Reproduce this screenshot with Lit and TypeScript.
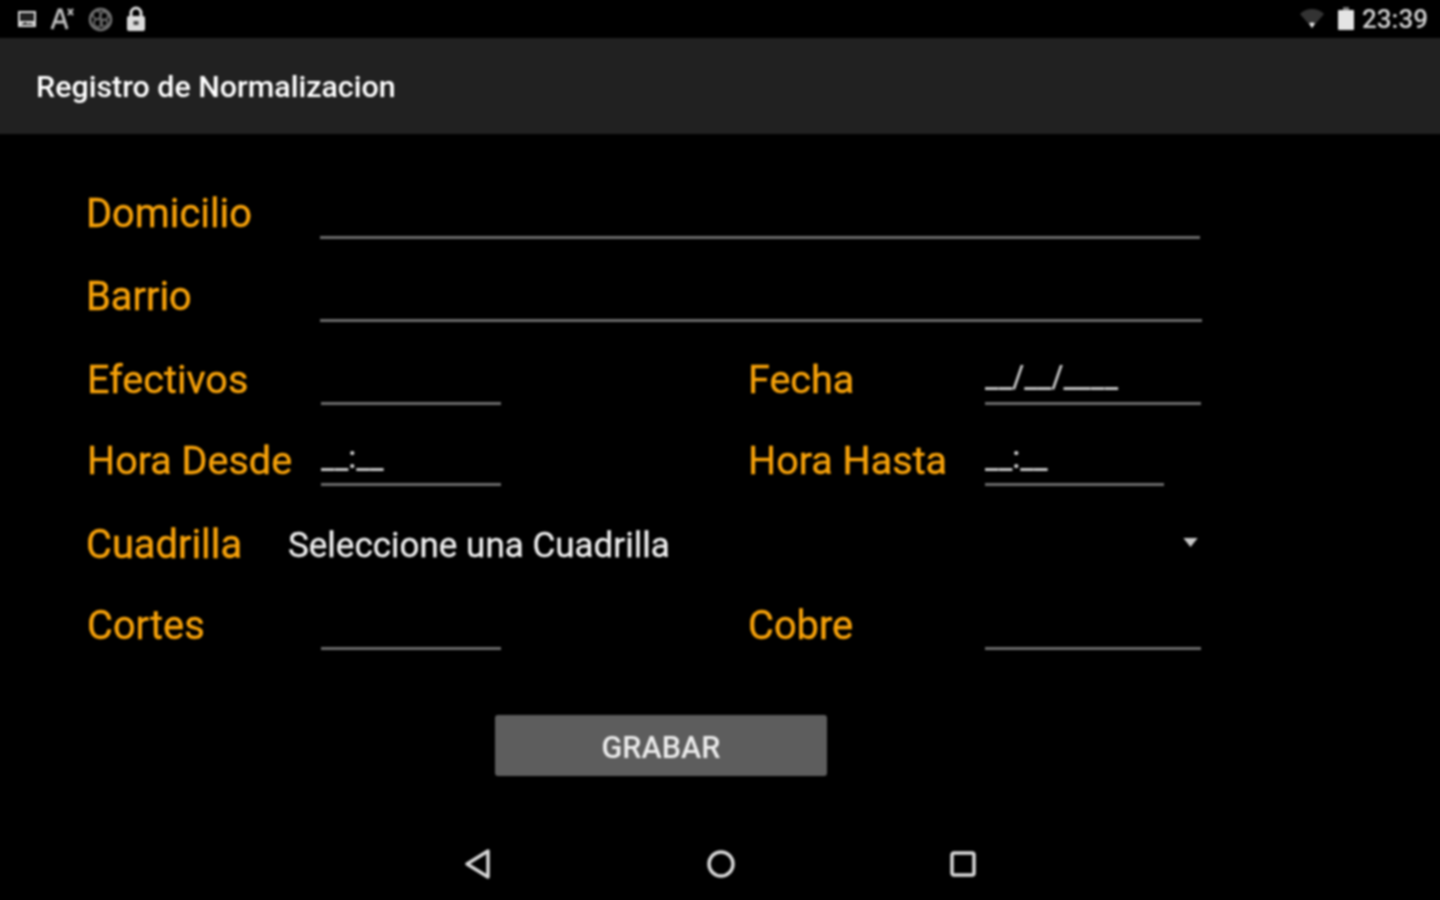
import { LitElement, html, css } from "lit";
import { customElement } from "lit/decorators.js";

@customElement("app-root")
export class AppRoot extends LitElement {
  static styles = css`
    :host { display: block; width: 1440px; height: 900px; background: #000; overflow: hidden; font-family: Roboto, "Liberation Sans", sans-serif; }
    .screen { width: 1448px; height: 900px; margin-left: -4px; padding: 0 4px; box-sizing: border-box; background: #000; display: flex; flex-direction: column; filter: blur(0.8px); }
    .status { height: 38px; flex: none; display: flex; align-items: center; justify-content: space-between; padding: 0 12px 0 16px; box-sizing: border-box; }
    .status-left, .status-right { display: flex; align-items: center; }
    .status-left { gap: 12px; }
    .status-right { gap: 11px; }
    .wifi { margin-right: 2px; }
    .battery { margin-right: -3px; }
    .clock { color: #d2d2d2; font-size: 26px; font-weight: 500; line-height: 38px; }
    .appbar { height: 96px; flex: none; margin: 0 -4px; background: #212121; display: flex; align-items: center; padding-left: 40px; box-sizing: border-box; color: #fff; font-size: 30.4px; font-weight: 500; }
    .form { flex: none; height: 681px; padding-top: 43px; box-sizing: border-box; }
    .row { display: flex; align-items: flex-end; }
    .r1 { height: 62px; margin-left: 86px; }
    .r2 { height: 83px; margin-left: 86px; }
    .r3, .r4, .r6 { margin-left: 87px; }
    .r3 { height: 83px; }
    .r4 { height: 81px; }
    .r5 { height: 82px; margin-left: 86px; align-items: center; padding-top: 36px; box-sizing: border-box; }
    .r6 { height: 82px; }
    .label { color: #f7a20a; font-size: 39.8px; line-height: 50px; white-space: nowrap; -webkit-text-stroke: 0.4px #f7a20a; }
    .r3 .label, .r4 .label { font-size: 39.5px; }
    .r6 .label { margin-bottom: -1px; }
    .w-wide { width: 234px; }
    .w-left { width: 234px; }
    .field { height: 3px; background: #6a6a6a; position: relative; flex: none; }
    .f-wide { width: 880px; }
    .f-wide2 { width: 882px; }
    .f-short { width: 180px; }
    .f-end { width: 216px; }
    .f-end-s { width: 179px; }
    .gap { width: 247px; flex: none; }
    .mask { position: absolute; left: 0; bottom: 9px; color: #c8c8c8; font-size: 30.5px; font-weight: 500; line-height: 38px; white-space: nowrap; }
    .right-label { width: 237px; }
    .spin { width: 912px; margin-left: 46px; display: flex; align-items: center; justify-content: space-between; flex: none; color: #f0f0f0; font-size: 35px; -webkit-text-stroke: 0.3px #f0f0f0; }
    .spin svg { margin: 0 2px 5px 0; }
    .r5 .label { width: 156px; padding-bottom: 1px; }
    .btnwrap { display: flex; padding: 65px 0 0 495px; }
    .btn { width: 332px; height: 61px; background: #5d5d5d; border: none; border-radius: 3px; color: #ececec; font: 500 30.5px Roboto, "Liberation Sans", sans-serif; padding: 3px 0 0; }
    .nav { flex: none; height: 85px; display: flex; align-items: center; padding: 13px 0 0 464px; gap: 215px; box-sizing: border-box; }
    svg { display: block; flex: none; }
  `;

  private row(cls: string, l1: string, m1: string, l2: string, m2: string, f2 = "f-end") {
    return html`<div class="row ${cls}">
      <span class="label w-left">${l1}</span>
      <div class="field f-short">${m1 ? html`<span class="mask">${m1}</span>` : ""}</div>
      <div class="gap"></div>
      <span class="label right-label">${l2}</span>
      <div class="field ${f2}">${m2 ? html`<span class="mask">${m2}</span>` : ""}</div>
    </div>`;
  }

  render() {
    return html`<div class="screen">
      <div class="status">
        <div class="status-left">
          <svg width="22" height="20" viewBox="0 0 22 20"><path d="M2 2h18v16H2z" fill="#d8d8d8"/><path d="M4 4h14v8H4z" fill="#222"/><path d="M5 16l4-3 3 2 2-1 4 2z" fill="#333"/></svg>
          <svg width="26" height="24" viewBox="0 0 26 24"><path d="M2 22L9 3h2l6 19M5 15h10" fill="none" stroke="#bdbdbd" stroke-width="3"/><path d="M18 2l5 6M23 2l-5 6" stroke="#bdbdbd" stroke-width="2"/></svg>
          <svg width="25" height="25" viewBox="0 0 25 25"><circle cx="12.500" cy="12.500" r="10.500" fill="none" stroke="#757575" stroke-width="2.500"/><circle cx="9" cy="8" r="4" fill="none" stroke="#666" stroke-width="2"/><circle cx="16" cy="9" r="4" fill="none" stroke="#666" stroke-width="2"/><circle cx="10" cy="16" r="4" fill="none" stroke="#666" stroke-width="2"/><circle cx="16" cy="16" r="3.500" fill="none" stroke="#666" stroke-width="2"/></svg>
          <svg width="22" height="26" viewBox="0 0 22 26"><path d="M6 11V7a5 5 0 0 1 10 0v4" fill="none" stroke="#dcdcdc" stroke-width="3"/><rect x="2" y="10" width="18" height="15" rx="2" fill="#dcdcdc"/><rect x="8.500" y="15" width="5" height="4" fill="#444"/></svg>
        </div>
        <div class="status-right">
          <svg class="wifi" width="26" height="22" viewBox="0 0 26 22"><path d="M1 6a17 17 0 0 1 24 0L13 20z" fill="#333"/><path d="M10 15.500a5 5 0 0 1 6 0L13 20z" fill="#e8e8e8"/></svg>
          <svg class="battery" width="16" height="24" viewBox="0 0 16 24"><path d="M5 0h6v3H5z" fill="#777"/><rect x="0" y="3" width="16" height="20" rx="1" fill="#e4e4e4"/></svg>
          <span class="clock">23:39</span>
        </div>
      </div>
      <div class="appbar">Registro de Normalizacion</div>
      <div class="form">
        <div class="row r1"><span class="label w-wide">Domicilio</span><div class="field f-wide"></div></div>
        <div class="row r2"><span class="label w-wide">Barrio</span><div class="field f-wide2"></div></div>
        ${this.row("r3", "Efectivos", "", "Fecha", "__/__/____")}
        ${this.row("r4", "Hora Desde", "__:__", "Hora Hasta", "__:__", "f-end-s")}
        <div class="row r5">
          <span class="label">Cuadrilla</span>
          <div class="spin"><span>Seleccione una Cuadrilla</span>
            <svg width="15" height="9" viewBox="0 0 16 10"><path d="M0 0h16L8 10z" fill="#c8c8c8"/></svg>
          </div>
        </div>
        ${this.row("r6", "Cortes", "", "Cobre", "")}
        <div class="btnwrap"><button class="btn">GRABAR</button></div>
      </div>
      <div class="nav">
        <svg width="28" height="32" viewBox="0 0 28 32"><path d="M24 3v26L3 16z" fill="none" stroke="#d8d8d8" stroke-width="3.500" stroke-linejoin="round"/></svg>
        <svg width="28" height="28" viewBox="0 0 28 28"><circle cx="14" cy="14" r="12" fill="none" stroke="#d8d8d8" stroke-width="3.500"/></svg>
        <svg width="26" height="26" viewBox="0 0 26 26"><rect x="2" y="2" width="22" height="22" rx="2" fill="none" stroke="#d8d8d8" stroke-width="3.500"/></svg>
      </div>
    </div>`;
  }
}
